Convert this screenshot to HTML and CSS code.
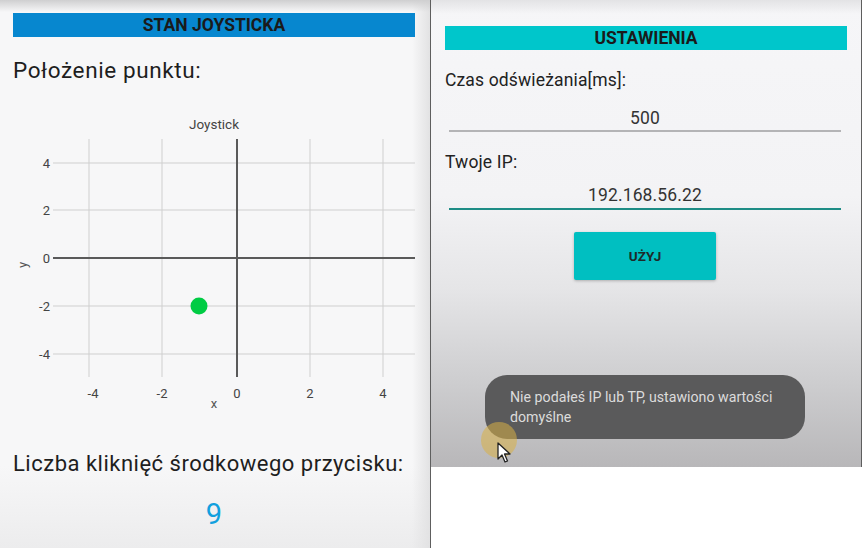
FILE: index.html
```html
<!DOCTYPE html>
<html lang="pl">
<head>
<meta charset="utf-8">
<title>Joystick</title>
<link rel="stylesheet" href="styles.css">
</head>
<body>
<div class="screen">
  <section class="left">
    <div class="bar bar-blue">STAN JOYSTICKA</div>
    <div class="label-lg">Położenie punktu:</div>
    <svg class="chart" width="402" height="310" viewBox="0 0 402 310">
      <text class="title" x="201" y="19" text-anchor="middle">Joystick</text>
      <g class="grid">
        <line x1="40" y1="53" x2="402" y2="53"/>
        <line x1="40" y1="100" x2="402" y2="100"/>
        <line x1="40" y1="196" x2="402" y2="196"/>
        <line x1="40" y1="244" x2="402" y2="244"/>
        <line x1="76" y1="29" x2="76" y2="267"/>
        <line x1="149" y1="29" x2="149" y2="267"/>
        <line x1="297" y1="29" x2="297" y2="267"/>
        <line x1="370" y1="29" x2="370" y2="267"/>
      </g>
      <g class="axis">
        <line x1="40" y1="148" x2="402" y2="148"/>
        <line x1="224" y1="29" x2="224" y2="267"/>
      </g>
      <g class="ticks" text-anchor="end">
        <text x="37" y="58">4</text>
        <text x="37" y="105">2</text>
        <text x="37" y="153">0</text>
        <text x="37" y="201">-2</text>
        <text x="37" y="249">-4</text>
      </g>
      <g class="ticks" text-anchor="middle">
        <text x="80" y="288">-4</text>
        <text x="149" y="288">-2</text>
        <text x="224" y="288">0</text>
        <text x="297" y="288">2</text>
        <text x="370" y="288">4</text>
      </g>
      <text class="axlabel" x="201" y="298" text-anchor="middle">x</text>
      <text class="axlabel" x="0" y="0" text-anchor="middle" transform="translate(14 155) rotate(-90)">y</text>
      <circle class="dot" cx="186" cy="196" r="8.5"/>
    </svg>
    <div class="label-md">Liczba kliknięć środkowego przycisku:</div>
    <div class="count">9</div>
  </section>
  <section class="right">
    <div class="settings">
      <div class="bar bar-cyan">USTAWIENIA</div>
      <div class="field-label first">Czas odświeżania[ms]:</div>
      <div class="field">500</div>
      <div class="field-label">Twoje IP:</div>
      <div class="field focused">192.168.56.22</div>
      <div class="btn-row"><div class="btn">UŻYJ</div></div>
      <div class="toast">Nie podałeś IP lub TP, ustawiono wartości domyślne</div>
      <div class="click"></div>
      <svg class="cursor" width="16" height="22" viewBox="0 0 16 22">
        <path d="M1 1 L1 17 L5 13 L8 20 L10.5 19 L7.5 12 L13 12 Z" fill="#fff" stroke="#222" stroke-width="1.3" stroke-linejoin="round"/>
      </svg>
    </div>
  </section>
</div>
</body>
</html>
```

FILE: styles.css
```css
html, body {
  margin: 0;
  padding: 0;
  background: #ffffff;
}
body {
  width: 863px;
  height: 548px;
  overflow: hidden;
  font-family: Roboto, "Noto Sans", "DejaVu Sans", sans-serif;
}
.screen {
  display: flex;
  width: 863px;
  height: 548px;
}
.left {
  box-sizing: border-box;
  width: 431px;
  height: 548px;
  padding: 13px 15px 0 13px;
  border-right: 1px solid #5e5e5e;
  background:
    linear-gradient(to bottom, #cfcfd0 0, rgba(247,247,248,0) 12px),
    linear-gradient(to right, rgba(247,247,248,0) calc(100% - 18px), #e2e2e3 100%),
    linear-gradient(to bottom, #f7f7f8 85%, #ececed 100%);
  display: flex;
  flex-direction: column;
}
.bar {
  height: 24px;
  line-height: 25px;
  text-align: center;
  font-weight: 700;
  font-size: 17.5px;
  color: #1a1a1a;
}
.bar-blue {
  background: #0787cf;
}
.bar-cyan {
  background: #00c6cb;
}
.label-lg {
  margin-top: 20px;
  font-size: 22.5px;
  letter-spacing: 0.6px;
  line-height: 26px;
  color: #1e1e1e;
}
.chart {
  display: block;
  margin-top: 27px;
}
.chart .title {
  font-size: 13.5px;
  fill: #444;
}
.chart .grid line {
  stroke: #cfcfcf;
  stroke-width: 1;
}
.chart .axis line {
  stroke: #5a5a5a;
  stroke-width: 2;
}
.chart .ticks text {
  font-size: 13px;
  fill: #444;
}
.chart .axlabel {
  font-size: 13px;
  fill: #555;
}
.chart .dot {
  fill: #00cc44;
}
.label-md {
  margin-top: 31px;
  font-size: 22px;
  letter-spacing: 0.5px;
  line-height: 25px;
  color: #1e1e1e;
  white-space: nowrap;
}
.count {
  margin-top: 22px;
  font-size: 29px;
  line-height: 33px;
  text-align: center;
  color: #12a0de;
}
.right {
  width: 432px;
  height: 548px;
  background: #ffffff;
}
.settings {
  position: relative;
  box-sizing: border-box;
  width: 431px;
  height: 467px;
  padding: 26px 14px 0 14px;
  border-right: 1px solid #5e5e5e;
  background:
    linear-gradient(to bottom, #e3e3e5 0, rgba(246,246,248,0) 14px),
    linear-gradient(to bottom, #f6f6f8 0%, #f3f3f5 42%, #e5e5e7 62%, #cdcdcf 82%, #b8b7b9 100%);
}
.field-label {
  margin-top: 20px;
  font-size: 17.5px;
  line-height: 20px;
  letter-spacing: 0.15px;
  color: #222;
}
.field {
  margin: 18px 6px 0 4px;
  padding-bottom: 2px;
  font-size: 17.5px;
  letter-spacing: 0.15px;
  line-height: 20px;
  text-align: center;
  color: #333;
  border-bottom: 2px solid #b4b4b6;
}
.field.focused {
  margin-top: 13px;
  padding-bottom: 3px;
  border-bottom-color: #1d8c85;
}
.btn-row {
  display: flex;
  justify-content: center;
  margin-top: 22px;
  padding-right: 2px;
}
.btn {
  width: 142px;
  height: 48px;
  line-height: 48px;
  text-align: center;
  background: #00bfc1;
  border-radius: 2px;
  box-shadow: 0 1px 3px rgba(0,0,0,0.25);
  font-size: 13.5px;
  font-weight: 700;
  color: #1d2a2a;
}
.toast {
  position: absolute;
  left: 54px;
  top: 375px;
  box-sizing: border-box;
  width: 320px;
  height: 64px;
  padding: 12px 30px 0 25px;
  border-radius: 22px;
  background: #5a5a5b;
  color: #dcdcdc;
  font-size: 14.2px;
  line-height: 20px;
}
.click {
  position: absolute;
  left: 50px;
  top: 422px;
  width: 36px;
  height: 36px;
  border-radius: 50%;
  background: rgba(216, 176, 70, 0.55);
}
.cursor {
  position: absolute;
  left: 66px;
  top: 442px;
}
```
